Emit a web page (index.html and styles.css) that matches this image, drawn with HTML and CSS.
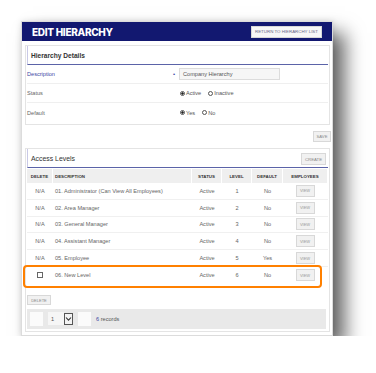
FILE: index.html
```html
<!DOCTYPE html>
<html lang="en">
<head>
  <meta charset="UTF-8">
  <meta name="viewport" content="width=device-width, initial-scale=1.0">
  <title>Edit Hierarchy</title>
  <link rel="stylesheet" href="styles.css">
</head>
<body>
  <div class="card">
    <div class="page-header">
      <h1>EDIT HIERARCHY</h1>
      <button class="btn btn-return">RETURN TO HIERARCHY LIST</button>
    </div>

    <div class="box">
      <div class="box-title">
        <h2>Hierarchy Details</h2>
      </div>
      <div class="form-row">
        <div class="label required">Description</div>
        <div class="value">
          <span class="req-dot">&bull;</span>
          <div class="text-input">Company Hierarchy</div>
        </div>
      </div>
      <div class="form-row">
        <div class="label">Status</div>
        <div class="value">
          <span class="radio checked"></span><span class="radio-label">Active</span>
          <span class="radio"></span><span class="radio-label">Inactive</span>
        </div>
      </div>
      <div class="form-row last">
        <div class="label">Default</div>
        <div class="value">
          <span class="radio checked"></span><span class="radio-label">Yes</span>
          <span class="radio"></span><span class="radio-label">No</span>
        </div>
      </div>
    </div>

    <div class="save-row">
      <button class="btn btn-small">SAVE</button>
    </div>

    <div class="box box-levels">
      <div class="box-title">
        <h2 class="light">Access Levels</h2>
        <button class="btn btn-create">CREATE</button>
      </div>

      <div class="grid grid-head">
        <div class="center">DELETE</div>
        <div>DESCRIPTION</div>
        <div class="center">STATUS</div>
        <div class="center">LEVEL</div>
        <div class="center">DEFAULT</div>
        <div class="center">EMPLOYEES</div>
      </div>

      <div class="grid grid-row">
        <div class="center">N/A</div>
        <div>01. Administrator (Can View All Employees)</div>
        <div class="center">Active</div>
        <div class="center">1</div>
        <div class="center">No</div>
        <div class="center"><button class="btn btn-view">VIEW</button></div>
      </div>
      <div class="grid grid-row">
        <div class="center">N/A</div>
        <div>02. Area Manager</div>
        <div class="center">Active</div>
        <div class="center">2</div>
        <div class="center">No</div>
        <div class="center"><button class="btn btn-view">VIEW</button></div>
      </div>
      <div class="grid grid-row">
        <div class="center">N/A</div>
        <div>03. General Manager</div>
        <div class="center">Active</div>
        <div class="center">3</div>
        <div class="center">No</div>
        <div class="center"><button class="btn btn-view">VIEW</button></div>
      </div>
      <div class="grid grid-row">
        <div class="center">N/A</div>
        <div>04. Assistant Manager</div>
        <div class="center">Active</div>
        <div class="center">4</div>
        <div class="center">No</div>
        <div class="center"><button class="btn btn-view">VIEW</button></div>
      </div>
      <div class="grid grid-row">
        <div class="center">N/A</div>
        <div>05. Employee</div>
        <div class="center">Active</div>
        <div class="center">5</div>
        <div class="center">Yes</div>
        <div class="center"><button class="btn btn-view">VIEW</button></div>
      </div>
      <div class="grid grid-row highlight">
        <div class="center"><span class="checkbox"></span></div>
        <div>06. New Level</div>
        <div class="center">Active</div>
        <div class="center">6</div>
        <div class="center">No</div>
        <div class="center"><button class="btn btn-view">VIEW</button></div>
      </div>

      <div class="delete-row">
        <button class="btn btn-delete">DELETE</button>
      </div>

      <div class="pager">
        <span class="pager-box"></span>
        <span class="pager-select">1</span>
        <span class="pager-arrow">
          <svg width="7" height="6" viewBox="0 0 7 6"><path d="M1 1.5 L3.5 4.2 L6 1.5" fill="none" stroke="#333" stroke-width="1.1"/></svg>
        </span>
        <span class="pager-box"></span>
        <span class="records"><span class="count">6</span> records</span>
      </div>
    </div>
  </div>
</body>
</html>
```

FILE: styles.css
```css
* {
  margin: 0;
  padding: 0;
  box-sizing: border-box;
}

body {
  font-family: "Liberation Sans", Arial, sans-serif;
  background: #ffffff;
  color: #555;
}

.card {
  width: 312px;
  margin: 21px 0 0 21px;
  background: #fff;
  border: 1px solid #dcdcdc;
  padding-bottom: 3px;
  box-shadow: 12px 12px 18px rgba(0, 0, 0, 0.6), 0 0 6px rgba(0, 0, 0, 0.12);
}

.page-header {
  height: 19px;
  background: #121870;
  display: flex;
  align-items: center;
  justify-content: space-between;
  padding: 0 10px 0 10px;
}

.page-header h1 {
  font-family: Inter, "Liberation Sans", sans-serif;
  font-size: 10px;
  font-weight: 800;
  color: #fff;
  letter-spacing: -0.3px;
}

.btn {
  font-family: "Liberation Sans", Arial, sans-serif;
  background: #f1f1f1;
  border: 1px solid #d8d8d8;
  color: #888;
  font-size: 4.2px;
  cursor: pointer;
}

.btn-return {
  background: #f7f7f7;
  color: #6a6a8a;
  height: 12px;
  width: 71px;
  font-size: 4.4px;
}

.box {
  margin: 4px 2px 0 3px;
  border: 1px solid #e4e4e4;
  padding: 0 1px 2px 1px;
}

.box-title {
  height: 19px;
  border-left: 1px solid #c9c9e6;
  border-bottom: 1.5px solid #5b63a8;
  display: flex;
  align-items: center;
  justify-content: space-between;
  padding: 0 2px 0 3px;
}

.box-title h2 {
  font-size: 6.6px;
  font-weight: bold;
  color: #333;
}

.box-title h2.light {
  font-size: 6.9px;
  font-weight: normal;
  color: #333;
}

.form-row {
  height: 19px;
  display: flex;
  align-items: center;
  border-bottom: 1px solid #efefef;
  font-size: 5.6px;
}

.form-row.last {
  border-bottom: none;
}

.label {
  width: 146px;
  color: #666;
}

.label.required {
  color: #3b48a3;
}

.value {
  display: flex;
  align-items: center;
}

.req-dot {
  color: #3b48a3;
  font-size: 6px;
  width: 6px;
}

.text-input {
  width: 101px;
  height: 12px;
  border: 1px solid #dcdcdc;
  background: #f6f6f6;
  color: #555;
  font-size: 5.6px;
  display: flex;
  align-items: center;
  padding-left: 3px;
}

.radio {
  width: 5px;
  height: 5px;
  border: 0.8px solid #555;
  border-radius: 50%;
  margin-left: 7px;
}

.radio.checked {
  background: radial-gradient(circle, #222 45%, transparent 55%);
}

.radio-label {
  margin-left: 1px;
  color: #555;
}

.save-row {
  display: flex;
  justify-content: flex-end;
  padding: 6px 0 5px 0;
}

.btn-small {
  width: 18px;
  height: 11px;
  margin-right: 1px;
}

.box-levels {
  margin-top: 1px;
  padding-bottom: 2px;
}

.btn-create {
  width: 25px;
  height: 12px;
  font-size: 4.3px;
  margin-top: 2px;
}

.grid {
  display: grid;
  grid-template-columns: 26px 139px 30px 30px 31px 1fr;
}

.grid-head {
  height: 14px;
  font-size: 4.4px;
  font-weight: bold;
  color: #333;
  margin-top: 1px;
}

.grid-head div {
  background: #efefef;
  display: flex;
  align-items: center;
  border-right: 1px solid #fff;
  padding-left: 2px;
}

.grid-head div.center {
  justify-content: center;
  padding-left: 0;
}

.grid-row {
  height: 16.8px;
  font-size: 5.6px;
  color: #666;
  border-bottom: 1px solid #f0f0f0;
}

.grid-row div {
  display: flex;
  align-items: center;
  padding-left: 2px;
}

.grid-row div.center {
  justify-content: center;
  padding-left: 0;
}

.btn-view {
  width: 19px;
  height: 12px;
  font-size: 4px;
  color: #999;
  margin-left: -1px;
}

.highlight {
  position: relative;
  border-bottom: none;
}

.highlight::after {
  content: "";
  position: absolute;
  left: -4px;
  right: 6px;
  top: -2px;
  bottom: -4px;
  border: 2.5px solid #ff8000;
  border-radius: 4px;
}

.checkbox {
  width: 6px;
  height: 6px;
  border: 0.8px solid #666;
  background: #fff;
}

.delete-row {
  padding: 4px 0 3px 0;
}

.btn-delete {
  width: 24px;
  height: 10px;
  font-size: 4px;
}

.pager {
  height: 20px;
  background: #e9e9e9;
  display: flex;
  align-items: center;
  padding-left: 3px;
  margin-right: 2px;
  font-size: 5.6px;
}

.pager-box {
  width: 13px;
  height: 14px;
  background: #fbfbfb;
  margin-right: 5px;
}

.pager-select {
  width: 16px;
  height: 13px;
  background: #f6f6f6;
  display: flex;
  align-items: center;
  padding-left: 3px;
  color: #555;
}

.pager-arrow {
  width: 9px;
  height: 12px;
  border: 0.8px solid #555;
  background: #f3f3f3;
  display: flex;
  align-items: center;
  justify-content: center;
  margin-right: 5px;
}

.records {
  color: #555;
}

.count {
  color: #3b48a3;
}
```
